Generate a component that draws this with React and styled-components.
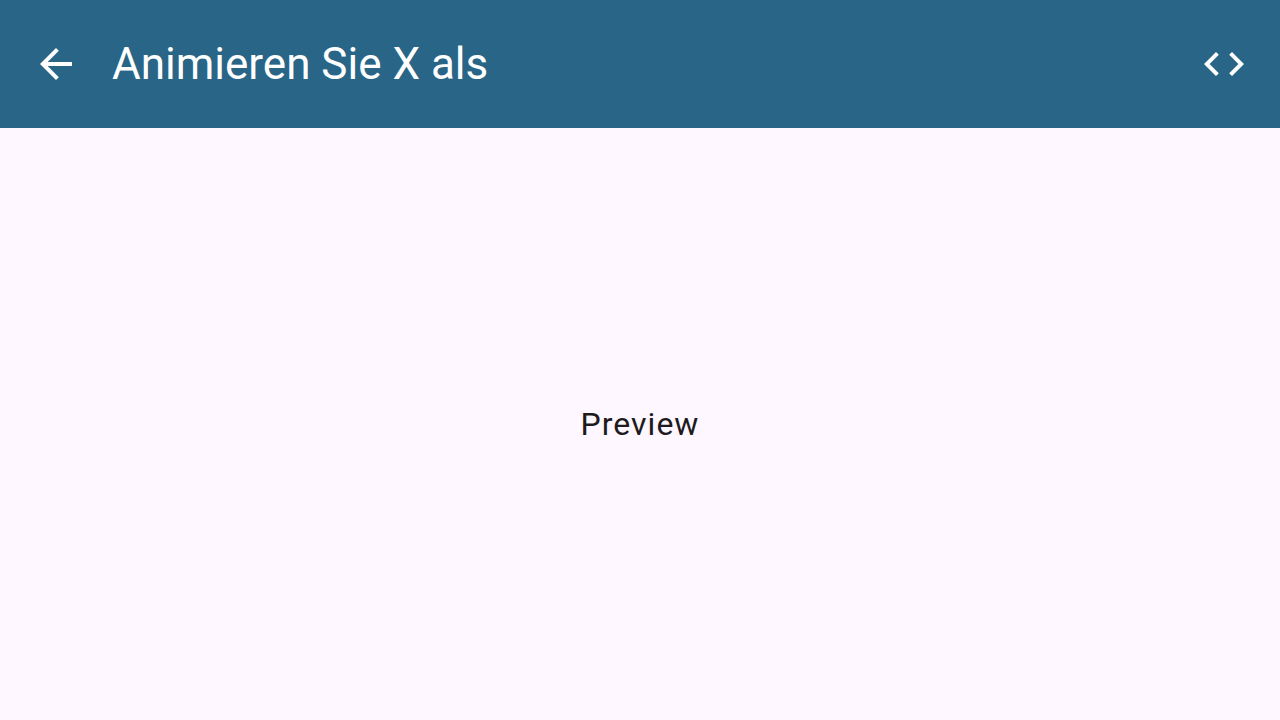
import React from "react";
import styled, { createGlobalStyle } from "styled-components";

const GlobalStyle = createGlobalStyle`
  *, *::before, *::after { box-sizing: border-box; }
  body {
    margin: 0;
    background: #fef7ff;
    color: #1d1b20;
    font-family: Roboto, "Liberation Sans", sans-serif;
  }
`;

const Screen = styled.div`
  display: flex;
  flex-direction: column;
  min-height: 100vh;
`;

const AppBar = styled.header`
  display: flex;
  align-items: center;
  height: 128px;
  padding: 0 8px;
  background: #296587;
  color: #ffffff;
`;

const IconButton = styled.button`
  display: flex;
  align-items: center;
  justify-content: center;
  flex: none;
  width: 96px;
  height: 96px;
  padding: 0;
  border: 0;
  border-radius: 50%;
  background: transparent;
  color: inherit;
  cursor: pointer;
`;

const Icon = styled.svg`
  width: 48px;
  height: 48px;
  fill: currentColor;
`;

const Title = styled.h1`
  flex: 1;
  margin: 0;
  padding: 0 8px;
  font-size: 44px;
  line-height: 56px;
  font-weight: 400;
`;

const Content = styled.main`
  display: flex;
  flex: 1;
  align-items: center;
  justify-content: center;
`;

const PreviewLabel = styled.p`
  margin: 0;
  font-size: 32px;
  line-height: 48px;
  letter-spacing: 1px;
`;

export default function App() {
  return (
    <Screen>
      <GlobalStyle />
      <AppBar>
        <IconButton type="button" aria-label="Zurück">
          <Icon viewBox="0 0 24 24" aria-hidden="true">
            <path d="M20 11H7.83l5.59-5.59L12 4l-8 8 8 8 1.41-1.41L7.83 13H20v-2z" />
          </Icon>
        </IconButton>
        <Title>Animieren Sie X als</Title>
        <IconButton type="button" aria-label="Code anzeigen">
          <Icon viewBox="0 0 24 24" aria-hidden="true">
            <path d="M9.4 16.6L4.8 12l4.6-4.6L8 6l-6 6 6 6 1.4-1.4zm5.2 0l4.6-4.6-4.6-4.6L16 6l6 6-6 6-1.4-1.4z" />
          </Icon>
        </IconButton>
      </AppBar>
      <Content>
        <PreviewLabel>Preview</PreviewLabel>
      </Content>
    </Screen>
  );
}
